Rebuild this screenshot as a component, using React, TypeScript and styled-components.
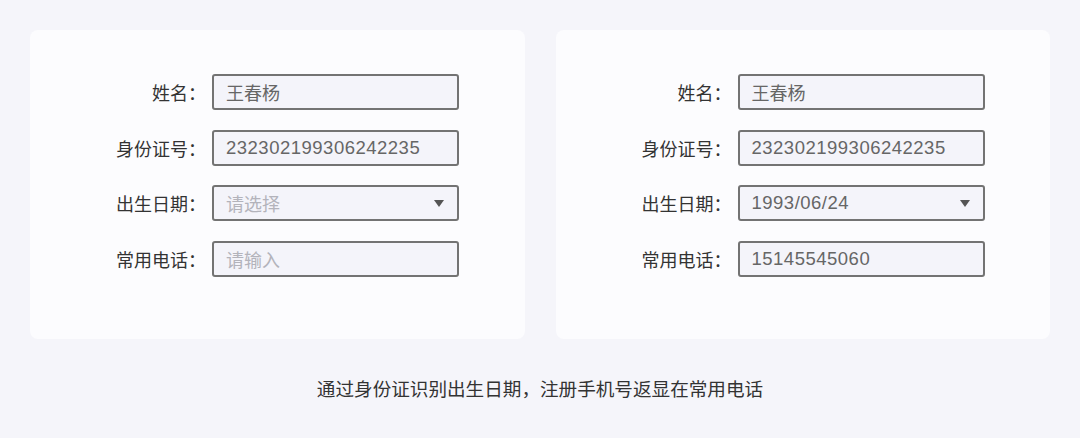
import React from "react";
import styled, { createGlobalStyle } from "styled-components";

const Global = createGlobalStyle`
  html, body { margin: 0; padding: 0; background: #f5f5fa; }
  body { font-family: "Liberation Sans", "Noto Sans CJK SC", sans-serif; }
`;

const Page = styled.div`
  width: 1080px;
  height: 438px;
  box-sizing: border-box;
  padding: 30px 30px 0;
  background: #f5f5fa;
  display: flex;
  flex-direction: column;
`;

const Cards = styled.div`
  display: flex;
  gap: 31px;
`;

const Card = styled.div`
  flex: 1;
  height: 309px;
  box-sizing: border-box;
  background: #fcfcfe;
  border-radius: 8px;
  padding: 44px 0 0 60px;
`;

const Form = styled.div`
  display: grid;
  grid-template-columns: 122px 247px;
  row-gap: 19.67px;
  align-items: center;
`;

const Label = styled.div`
  font-family: "Noto Sans CJK SC", sans-serif;
  font-size: 18px;
  color: #333333;
  text-align: right;
  line-height: 36px;
  padding-right: 6px;
  white-space: nowrap;
`;

const Field = styled.div<{ $placeholder?: boolean }>`
  position: relative;
  height: 36px;
  box-sizing: border-box;
  border: 2px solid #737373;
  border-radius: 3px;
  background: #f4f4fa;
  padding: 0 12px;
  display: flex;
  align-items: center;
  font-size: 18.5px;
  letter-spacing: 0.5px;
  color: ${(p) => (p.$placeholder ? "#b3b3bb" : "#666666")};
  white-space: nowrap;
`;

const Cjk = styled.span`
  font-family: "Noto Sans CJK SC", sans-serif;
  font-size: 18px;
  letter-spacing: 0;
`;

const Arrow = styled.span`
  position: absolute;
  right: 13px;
  top: 50%;
  margin-top: -3px;
  width: 0;
  height: 0;
  border-left: 5.5px solid transparent;
  border-right: 5.5px solid transparent;
  border-top: 7px solid #555555;
`;

const Caption = styled.div`
  margin-top: 37px;
  text-align: center;
  font-family: "Noto Sans CJK SC", sans-serif;
  font-size: 18.6px;
  line-height: 24px;
  color: #333333;
`;

type Row = { label: string; value: string; cjk?: boolean; placeholder?: boolean; select?: boolean };

const left: Row[] = [
  { label: "姓名：", value: "王春杨", cjk: true },
  { label: "身份证号：", value: "232302199306242235" },
  { label: "出生日期：", value: "请选择", cjk: true, placeholder: true, select: true },
  { label: "常用电话：", value: "请输入", cjk: true, placeholder: true },
];

const right: Row[] = [
  { label: "姓名：", value: "王春杨", cjk: true },
  { label: "身份证号：", value: "232302199306242235" },
  { label: "出生日期：", value: "1993/06/24", select: true },
  { label: "常用电话：", value: "15145545060" },
];

function FormCard({ rows }: { rows: Row[] }) {
  return (
    <Card>
      <Form>
        {rows.map((r) => (
          <React.Fragment key={r.label}>
            <Label>{r.label}</Label>
            <Field $placeholder={r.placeholder}>
              {r.cjk ? <Cjk>{r.value}</Cjk> : r.value}
              {r.select && <Arrow />}
            </Field>
          </React.Fragment>
        ))}
      </Form>
    </Card>
  );
}

export default function App() {
  return (
    <>
      <Global />
      <Page>
        <Cards>
          <FormCard rows={left} />
          <FormCard rows={right} />
        </Cards>
        <Caption>通过身份证识别出生日期，注册手机号返显在常用电话</Caption>
      </Page>
    </>
  );
}
